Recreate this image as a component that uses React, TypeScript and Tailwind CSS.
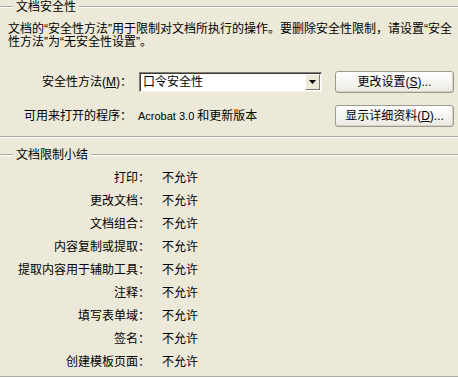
const font = "font-['Liberation_Sans','Noto_Sans_CJK_SC',sans-serif]";

function Rule({ className = "" }: { className?: string }) {
  return <div className={"h-[2px] border-t border-b border-t-[#ACA899] border-b-white " + className} />;
}

function GroupHeader({ title }: { title: string }) {
  return (
    <div className="flex h-[14px] items-center">
      <Rule className="w-[13px]" />
      <span className="px-[3px] leading-[14px] whitespace-nowrap">{title}</span>
      <Rule className="flex-1" />
    </div>
  );
}

function XpButton({ children }: { children: React.ReactNode }) {
  return (
    <button className="flex h-[22px] w-[119px] items-center justify-center rounded-[3px] border border-[#9C9A8E] bg-gradient-to-b from-[#FFFFFF] to-[#ECEAE1] text-[12px] leading-none text-black shadow-[inset_-1px_-1px_0_#D6D3C6]">
      {children}
    </button>
  );
}

const restrictions = [
  "打印：",
  "更改文档：",
  "文档组合：",
  "内容复制或提取：",
  "提取内容用于辅助工具：",
  "注释：",
  "填写表单域：",
  "签名：",
  "创建模板页面：",
];

export default function App() {
  return (
    <div className={"h-[378px] w-[458px] overflow-hidden bg-[#ECE9D8] text-[12px] text-black " + font}>
      <GroupHeader title="文档安全性" />

      {/* 说明 */}
      <p className="mt-[9px] pl-[8px] leading-[13px] whitespace-nowrap">
        文档的“安全性方法”用于限制对文档所执行的操作。要删除安全性限制，请设置“安全
        <br />
        性方法”为“无安全性设置”。
      </p>

      {/* 安全性方法 */}
      <div className="mt-[22px] flex h-[22px] items-center">
        <label className="w-[132px] text-right whitespace-nowrap">
          安全性方法(<span className="underline">M</span>)：
        </label>
        <div className="ml-[7px] flex h-[20px] w-[183px] border border-t-[#7F7D72] border-l-[#7F7D72] border-b-[#F5F4EE] border-r-[#F5F4EE] bg-white shadow-[inset_1px_1px_0_#3C3B36]">
          <span className="flex-1 pl-[3px] leading-[18px]">口令安全性</span>
          <div className="m-[1px] flex w-[15px] items-center justify-center border border-t-white border-l-white border-b-[#7F7D72] border-r-[#7F7D72] bg-[#ECE9D8]">
            <svg width="7" height="4" viewBox="0 0 7 4">
              <path d="M0 0h7L3.5 4z" fill="#000" />
            </svg>
          </div>
        </div>
        <div className="ml-[13px]">
          <XpButton>
            更改设置(<span className="underline">S</span>)...
          </XpButton>
        </div>
      </div>

      {/* 可用来打开的程序 */}
      <div className="mt-[12px] flex h-[22px] items-center">
        <label className="w-[132px] text-right whitespace-nowrap">可用来打开的程序：</label>
        <span className="ml-[6px] w-[191px] whitespace-nowrap">
          <span className="text-[11px]">Acrobat 3.0 </span>和更新版本
        </span>
        <div className="ml-[6px]">
          <XpButton>
            显示详细资料(<span className="underline">D</span>)...
          </XpButton>
        </div>
      </div>

      <Rule className="mt-[9px]" />

      <div className="mt-[10px]">
        <GroupHeader title="文档限制小结" />
      </div>

      <div className="mt-[4px] flex flex-col">
        {restrictions.map((r) => (
          <div key={r} className="flex h-[23px] items-center">
            <span className="w-[150px] text-right whitespace-nowrap">{r}</span>
            <span className="ml-[12px]">不允许</span>
          </div>
        ))}
      </div>

      <Rule className="mt-[3px]" />
    </div>
  );
}
